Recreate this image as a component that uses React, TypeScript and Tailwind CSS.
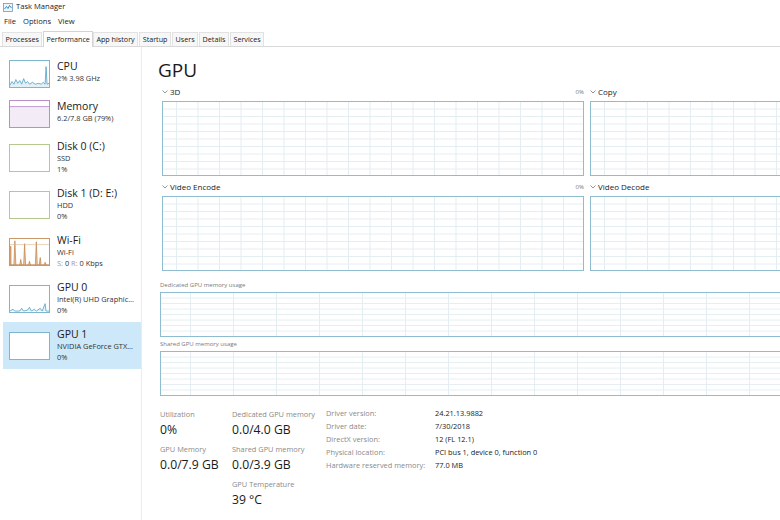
import React from "react";

type GridProps = { id: string; cw: number; ch: number; ox?: number; oy?: number };

// light grid used inside every performance graph
function Grid({ id, cw, ch, ox = 0, oy = 0 }: GridProps) {
  return (
    <svg className="block w-full h-full">
      <defs>
        <pattern id={id} width={cw} height={ch} x={ox} y={oy} patternUnits="userSpaceOnUse">
          <path d={`M ${cw - 0.5} 0 V ${ch} M 0 ${ch - 0.5} H ${cw}`} stroke="#e3edf2" strokeWidth="1" fill="none" />
        </pattern>
      </defs>
      <rect width="100%" height="100%" fill={`url(#${id})`} />
    </svg>
  );
}

function Chevron() {
  return (
    <svg width="6" height="4" viewBox="0 0 6 4" className="mr-[2px]">
      <path d="M0.5 0.5 L3 3 L5.5 0.5" stroke="#8a8a8a" strokeWidth="0.9" fill="none" />
    </svg>
  );
}

function Thumb({ kind }: { kind: string }) {
  const border: Record<string, string> = {
    cpu: "border-[#7fb6cf]",
    mem: "border-[#b98fc6]",
    disk: "border-[#b5c98f]",
    wifi: "border-[#c9976a]",
    gpu: "border-[#7fb6cf]",
  };
  const b = border[kind.startsWith("gpu") ? "gpu" : kind];
  return (
    <div className={`w-[41px] h-[28px] shrink-0 border ${b} bg-white overflow-hidden`}>
      <svg viewBox="0 0 40 28" preserveAspectRatio="none" className="block w-full h-full">
        {kind === "cpu" && (
          <>
            <path
              d="M0 26 L2 22 L4 25 L6 20 L8 24 L10 21 L12 25 L14 19 L16 24 L18 22 L20 25 L23 23 L26 25 L29 24 L32 25 L34 23 L36 25 L37 6 L38 25 L40 24 L40 28 L0 28 Z"
              fill="#e3f0f6"
            />
            <path
              d="M0 26 L2 22 L4 25 L6 20 L8 24 L10 21 L12 25 L14 19 L16 24 L18 22 L20 25 L23 23 L26 25 L29 24 L32 25 L34 23 L36 25 L37 6 L38 25 L40 24"
              stroke="#4b9cc3"
              strokeWidth="0.8"
              fill="none"
            />
          </>
        )}
        {kind === "mem" && (
          <>
            <rect x="0" y="6" width="40" height="22" fill="#f3ebf5" />
            <path d="M0 6 H40" stroke="#b07fc0" strokeWidth="0.8" />
          </>
        )}
        {kind === "wifi" && (
          <>
            <path
              d="M0 28 L0 8 L1 8 L1 28 L4 28 L5 2 L6 28 L10 28 L11 22 L12 28 L14 28 L15 5 L16 28 L19 28 L20 24 L21 28 L26 28 L27 3 L28 28 L30 28 L31 20 L32 28 L35 28 L36 25 L37 28 L40 28 Z"
              fill="#e9c9a9"
              stroke="#c07a3e"
              strokeWidth="0.7"
            />
            <path d="M0 6 H40" stroke="#d8b18b" strokeWidth="0.6" />
          </>
        )}
        {kind === "gpu0" && (
          <path
            d="M0 27 L3 25 L5 27 L10 27 L12 24 L14 27 L18 26 L20 23 L22 27 L25 25 L27 27 L31 24 L33 27 L36 19 L37 27 L40 27"
            stroke="#4b9cc3"
            strokeWidth="0.8"
            fill="#e3f0f6"
          />
        )}
      </svg>
    </div>
  );
}

type Item = { kind: string; title: string; lines: React.ReactNode[]; selected?: boolean };

const items: Item[] = [
  { kind: "cpu", title: "CPU", lines: ["2%  3.98 GHz"] },
  { kind: "mem", title: "Memory", lines: ["6.2/7.8 GB (79%)"] },
  { kind: "disk", title: "Disk 0 (C:)", lines: ["SSD", "1%"] },
  { kind: "disk", title: "Disk 1 (D: E:)", lines: ["HDD", "0%"] },
  {
    kind: "wifi",
    title: "Wi-Fi",
    lines: [
      "Wi-Fi",
      <span key="s">
        <span className="text-[#9a9a9a]">S:</span> 0 <span className="text-[#9a9a9a]">R:</span> 0 Kbps
      </span>,
    ],
  },
  { kind: "gpu0", title: "GPU 0", lines: ["Intel(R) UHD Graphic...", "0%"] },
  { kind: "gpu1", title: "GPU 1", lines: ["NVIDIA GeForce GTX...", "0%"], selected: true },
];

const tabs = ["Processes", "Performance", "App history", "Startup", "Users", "Details", "Services"];

function GraphBox({ id, h, cw, ch, ox, w }: { id: string; h: string; cw: number; ch: number; ox: number; w: string }) {
  return (
    <div className={`${w} ${h} shrink-0 border border-[#8fbdd0] bg-white`}>
      <Grid id={id} cw={cw} ch={ch} ox={ox} />
    </div>
  );
}

export default function App() {
  return (
    <div className="w-[780px] h-[520px] overflow-hidden bg-white text-[#1a1a1a] font-['Open_Sans','Noto_Sans',sans-serif] flex flex-col">
      {/* title bar */}
      <div className="h-[14px] flex items-center pl-[3px] gap-[3px] text-[7.6px]">
        <svg width="10" height="9" viewBox="0 0 10 9">
          <rect x="0.5" y="0.5" width="9" height="8" fill="#eef5fa" stroke="#6a9cbf" strokeWidth="0.8" />
          <path d="M1.5 6 L3.5 3.5 L5 5.5 L6.5 2.5 L8.5 5" stroke="#2e7fb8" strokeWidth="0.9" fill="none" />
        </svg>
        <span>Task Manager</span>
      </div>
      {/* menu */}
      <div className="h-[15px] flex items-center gap-[7px] pl-[4px] text-[7.6px]">
        <span>File</span>
        <span>Options</span>
        <span>View</span>
      </div>
      {/* tabs */}
      <div className="h-[18px] flex items-end pl-[2px] border-b border-[#d9d9d9] text-[7.2px]">
        {tabs.map((t) => (
          <div
            key={t}
            className={
              t === "Performance"
                ? "h-[16px] px-[2px] flex items-center bg-white border border-b-0 border-[#d4d4d4] -mb-px relative"
                : "h-[14px] px-[2.5px] flex items-center bg-[#f7f7f7] border border-b-0 border-[#e2e2e2] mr-px"
            }
          >
            {t}
          </div>
        ))}
      </div>

      <div className="flex flex-1 min-h-0">
        {/* sidebar */}
        <div className="w-[142px] shrink-0 border-r border-[#ececec] pt-[7px] pl-[3px]">
          {items.map((it) => (
            <div
              key={it.title}
              className={`flex items-center gap-[7px] pl-[6px] py-[6px] ${it.selected ? "bg-[#cde8f8]" : ""}`}
            >
              <Thumb kind={it.kind} />
              <div className="self-start">
                <div className="text-[10.5px] leading-[13px]">{it.title}</div>
                {it.lines.map((l, i) => (
                  <div key={i} className="text-[7.4px] leading-[11px] text-[#333] whitespace-nowrap">
                    {l}
                  </div>
                ))}
              </div>
            </div>
          ))}
        </div>

        {/* main */}
        <div className="flex-1 min-w-0 overflow-hidden pl-[16px] pt-[11px]">
          <div className="text-[19px] leading-[24px]">GPU</div>

          <div className="pl-[4px] mt-[4px] flex gap-[6px]">
            <div className="w-[422px] shrink-0">
              <div className="h-[12px] flex items-center text-[8px]">
                <Chevron />
                <span>3D</span>
                <span className="ml-auto text-[6px] text-[#777]">0%</span>
              </div>
              <div className="mt-[3px]">
                <GraphBox id="g3d" w="w-[422px]" h="h-[75px]" cw={21.5} ch={7.5} ox={14} />
              </div>
            </div>
            <div className="w-[422px] shrink-0">
              <div className="h-[12px] flex items-center text-[8px]">
                <Chevron />
                <span>Copy</span>
              </div>
              <div className="mt-[3px]">
                <GraphBox id="gcopy" w="w-[422px]" h="h-[75px]" cw={21.5} ch={7.5} ox={14} />
              </div>
            </div>
          </div>

          <div className="pl-[4px] mt-[5px] flex gap-[6px]">
            <div className="w-[422px] shrink-0">
              <div className="h-[12px] flex items-center text-[8px]">
                <Chevron />
                <span>Video Encode</span>
                <span className="ml-auto text-[6px] text-[#777]">0%</span>
              </div>
              <div className="mt-[3px]">
                <GraphBox id="genc" w="w-[422px]" h="h-[75px]" cw={21.5} ch={7.5} ox={14} />
              </div>
            </div>
            <div className="w-[422px] shrink-0">
              <div className="h-[12px] flex items-center text-[8px]">
                <Chevron />
                <span>Video Decode</span>
              </div>
              <div className="mt-[3px]">
                <GraphBox id="gdec" w="w-[422px]" h="h-[75px]" cw={21.5} ch={7.5} ox={14} />
              </div>
            </div>
          </div>

          <div className="pl-[2px] mt-[8px]">
            <div className="h-[12px] flex items-center text-[6px] text-[#7a7a7a]">Dedicated GPU memory usage</div>
            <div className="mt-px">
              <GraphBox id="gded" w="w-[700px]" h="h-[45px]" cw={43} ch={5.5} ox={30} />
            </div>
            <div className="h-[12px] mt-[1px] flex items-center text-[6px] text-[#7a7a7a]">Shared GPU memory usage</div>
            <div className="mt-px">
              <GraphBox id="gsh" w="w-[700px]" h="h-[45px]" cw={43} ch={5.5} ox={30} />
            </div>
          </div>

          {/* stats */}
          <div className="pl-[2px] mt-[12px] flex">
            <div className="w-[72px] shrink-0">
              <Stat label="Utilization" value="0%" />
              <Stat label="GPU Memory" value="0.0/7.9 GB" />
            </div>
            <div className="w-[94px] shrink-0">
              <Stat label="Dedicated GPU memory" value="0.0/4.0 GB" />
              <Stat label="Shared GPU memory" value="0.0/3.9 GB" />
              <Stat label="GPU Temperature" value="39 °C" />
            </div>
            <div className="text-[7.4px] leading-[13px] -mt-px">
              {[
                ["Driver version:", "24.21.13.9882"],
                ["Driver date:", "7/30/2018"],
                ["DirectX version:", "12 (FL 12.1)"],
                ["Physical location:", "PCI bus 1, device 0, function 0"],
                ["Hardware reserved memory:", "77.0 MB"],
              ].map(([k, v]) => (
                <div key={k} className="flex">
                  <span className="w-[109px] text-[#8a8a8a]">{k}</span>
                  <span>{v}</span>
                </div>
              ))}
            </div>
          </div>
        </div>
      </div>
    </div>
  );
}

function Stat({ label, value }: { label: string; value: string }) {
  return (
    <div className="mb-[4px]">
      <div className="text-[7.4px] leading-[12px] text-[#8a8a8a] whitespace-nowrap">{label}</div>
      <div className="text-[12.2px] leading-[19px] whitespace-nowrap">{value}</div>
    </div>
  );
}
